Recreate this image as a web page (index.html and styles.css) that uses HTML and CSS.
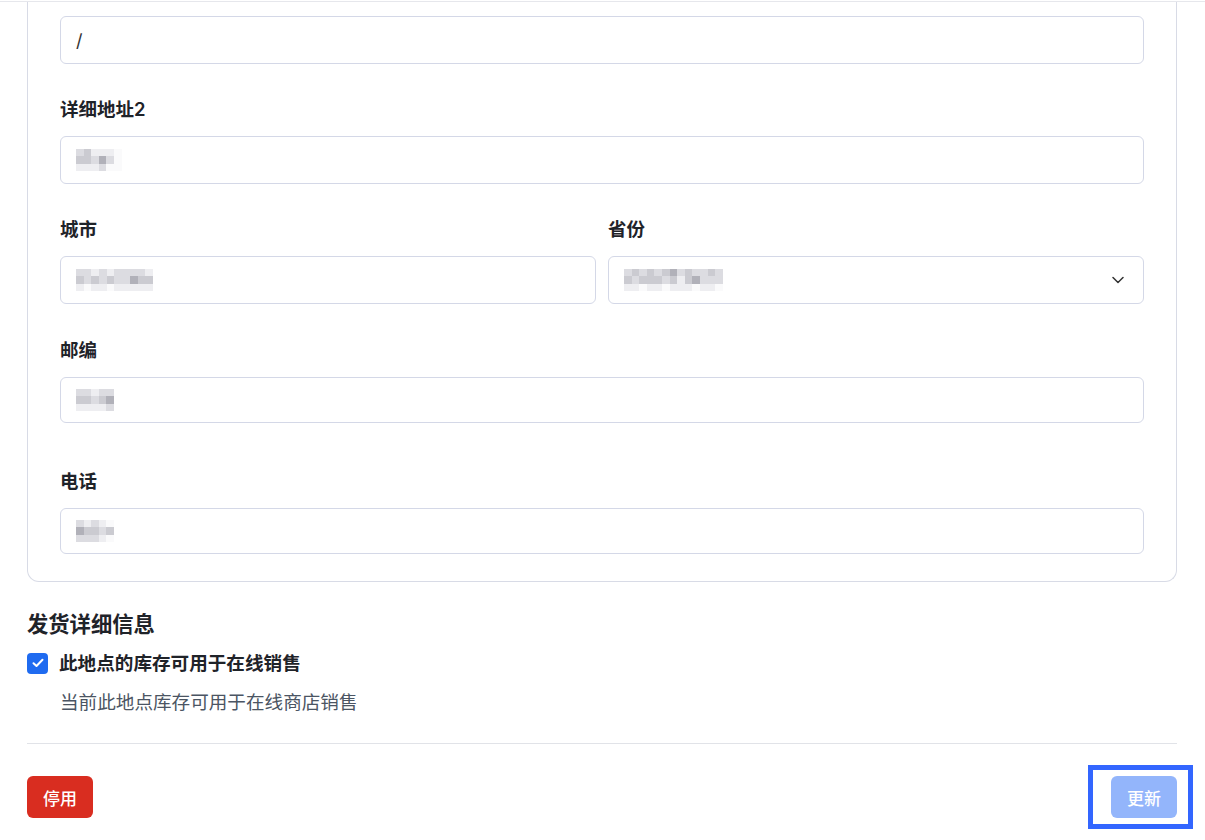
FILE: index.html
```html
<!DOCTYPE html>
<html lang="zh-CN">
<head>
    <meta charset="UTF-8">
    <meta name="viewport" content="width=device-width, initial-scale=1.0">
    <title>编辑地点</title>
    <link rel="stylesheet" href="styles.css">
</head>
<body>
    <div class="topline"></div>
    <div class="page">
        <div class="card">
            <div class="input first">/</div>

            <div class="field">
                <label>详细地址2</label>
                <div class="input">
                    <span class="blur cols6">
                        <i class="b"></i><i class="c"></i><i class="a"></i><i class="a"></i><i class="a"></i><i class="o"></i>
                        <i class="c"></i><i class="c"></i><i class="b"></i><i class="d"></i><i class="b"></i><i class="o"></i>
                        <i class="a"></i><i class="a"></i><i class="a"></i><i class="b"></i><i class="o"></i><i class="o"></i>
                    </span>
                </div>
            </div>

            <div class="row">
                <div class="field">
                    <label>城市</label>
                    <div class="input">
                        <span class="blur cols10">
                            <i class="b"></i><i class="b"></i><i class="a"></i><i class="b"></i><i class="a"></i><i class="b"></i><i class="b"></i><i class="b"></i><i class="b"></i><i class="a"></i>
                            <i class="c"></i><i class="b"></i><i class="c"></i><i class="b"></i><i class="c"></i><i class="b"></i><i class="b"></i><i class="d"></i><i class="c"></i><i class="c"></i>
                            <i class="a"></i><i class="o"></i><i class="a"></i><i class="a"></i><i class="o"></i><i class="a"></i><i class="a"></i><i class="a"></i><i class="a"></i><i class="a"></i>
                        </span>
                    </div>
                </div>
                <div class="field">
                    <label>省份</label>
                    <div class="input select">
                        <span class="blur cols13">
                            <i class="b"></i><i class="c"></i><i class="b"></i><i class="c"></i><i class="b"></i><i class="c"></i><i class="d"></i><i class="b"></i><i class="c"></i><i class="b"></i><i class="b"></i><i class="c"></i><i class="b"></i>
                            <i class="c"></i><i class="b"></i><i class="c"></i><i class="c"></i><i class="c"></i><i class="b"></i><i class="c"></i><i class="a"></i><i class="c"></i><i class="d"></i><i class="b"></i><i class="b"></i><i class="b"></i>
                            <i class="a"></i><i class="a"></i><i class="o"></i><i class="a"></i><i class="a"></i><i class="o"></i><i class="a"></i><i class="a"></i><i class="a"></i><i class="o"></i><i class="a"></i><i class="a"></i><i class="o"></i>
                        </span>
                        <svg class="chevron" width="12" height="8" viewBox="0 0 12 8">
                            <path d="M1 1.5 L6 6.5 L11 1.5" fill="none" stroke="#333" stroke-width="1.5" stroke-linecap="round" stroke-linejoin="round"/>
                        </svg>
                    </div>
                </div>
            </div>

            <div class="field">
                <label>邮编</label>
                <div class="input short">
                    <span class="blur cols5">
                        <i class="b"></i><i class="b"></i><i class="a"></i><i class="b"></i><i class="b"></i>
                        <i class="c"></i><i class="c"></i><i class="b"></i><i class="c"></i><i class="d"></i>
                        <i class="a"></i><i class="a"></i><i class="a"></i><i class="a"></i><i class="b"></i>
                    </span>
                </div>
            </div>

            <div class="field phone">
                <label>电话</label>
                <div class="input short">
                    <span class="blur cols5">
                        <i class="b"></i><i class="a"></i><i class="b"></i><i class="a"></i><i class="o"></i>
                        <i class="d"></i><i class="c"></i><i class="c"></i><i class="b"></i><i class="c"></i>
                        <i class="b"></i><i class="b"></i><i class="b"></i><i class="a"></i><i class="o"></i>
                    </span>
                </div>
            </div>
        </div>

        <div class="shipping">
            <h2>发货详细信息</h2>
            <div class="check-row">
                <span class="checkbox">
                    <svg width="12" height="10" viewBox="0 0 12 10">
                        <path d="M1.5 5.2 L4.5 8 L10.5 1.8" fill="none" stroke="#fff" stroke-width="2" stroke-linecap="round" stroke-linejoin="round"/>
                    </svg>
                </span>
                <span class="check-label">此地点的库存可用于在线销售</span>
            </div>
            <p class="hint">当前此地点库存可用于在线商店销售</p>
        </div>

        <div class="actions">
            <button class="btn danger">停用</button>
            <span class="focus-box">
                <button class="btn primary" disabled>更新</button>
            </span>
        </div>
    </div>
</body>
</html>
```

FILE: styles.css
```css
body {
    font-family: "Inter", "Noto Sans CJK SC", sans-serif;
    margin: 0;
    padding: 0;
    background-color: #fff;
    color: #1f2329;
}
.topline {
    height: 1px;
    border-bottom: 1px solid #e6e7ec;
}
.page {
    padding: 0 28px 0 27px;
}
.card {
    border: 1px solid #d8dbe6;
    border-top: none;
    border-radius: 0 0 12px 12px;
    padding: 14px 32px 27px;
}
.input {
    box-sizing: border-box;
    height: 48px;
    border: 1px solid #d4d8e7;
    border-radius: 6px;
    display: flex;
    align-items: center;
    padding: 0 15px;
    font-size: 18px;
    color: #333;
}
.input.short {
    height: 46px;
}
.input.select {
    justify-content: space-between;
    padding-right: 19px;
}
.field {
    margin-top: 33px;
}
.field label {
    display: block;
    font-size: 18.5px;
    font-weight: 600;
    line-height: 24px;
    margin-bottom: 15px;
}
.field.phone {
    margin-top: 46px;
}
.row {
    display: grid;
    grid-template-columns: 1fr 1fr;
    gap: 12px;
}
.row .field {
    margin-top: 33px;
}
.row + .field {
    margin-top: 34px;
}
.blur {
    display: inline-grid;
    grid-auto-rows: 7.6px;
    grid-template-columns: repeat(6, 7.6px);
}
.blur.cols5 { grid-template-columns: repeat(5, 7.6px); }
.blur.cols10 { grid-template-columns: repeat(10, 7.7px); }
.blur.cols13 { grid-template-columns: repeat(13, 7.6px); }
.blur i { display: block; }
.blur .o { background: #fafafb; }
.blur .a { background: #eeeef1; }
.blur .b { background: #dcdce1; }
.blur .c { background: #cbcbd1; }
.blur .d { background: #b1b1b9; }
.chevron {
    display: block;
}
.shipping {
    padding-top: 28px;
}
.shipping h2 {
    margin: 0;
    font-size: 21.3px;
    font-weight: 600;
    line-height: 28px;
}
.check-row {
    display: flex;
    align-items: center;
    gap: 11px;
    margin-top: 12px;
}
.checkbox {
    width: 21px;
    height: 21px;
    border-radius: 4px;
    background: #1f6bf0;
    display: flex;
    align-items: center;
    justify-content: center;
}
.check-label {
    font-size: 18.6px;
    font-weight: 600;
    line-height: 26px;
}
.hint {
    margin: 13px 0 0 33px;
    font-size: 18.6px;
    line-height: 26px;
    color: #4b5563;
}
.actions {
    border-top: 1px solid #e1e3e8;
    margin-top: 28px;
    display: flex;
    justify-content: space-between;
    align-items: flex-start;
    padding-top: 21px;
}
.btn {
    height: 42px;
    padding: 0 16px;
    border: none;
    border-radius: 6px;
    font-family: "Inter", "Noto Sans CJK SC", sans-serif;
    font-size: 17px;
    font-weight: 500;
    color: #fff;
}
.btn.danger {
    background: #d92d20;
    margin-top: 11px;
}
.btn.primary {
    background: #93b5fb;
}
.focus-box {
    display: block;
    border: 5px solid #3366ff;
    padding: 6px 11px 6px 18px;
    margin-right: -16px;
}
```
